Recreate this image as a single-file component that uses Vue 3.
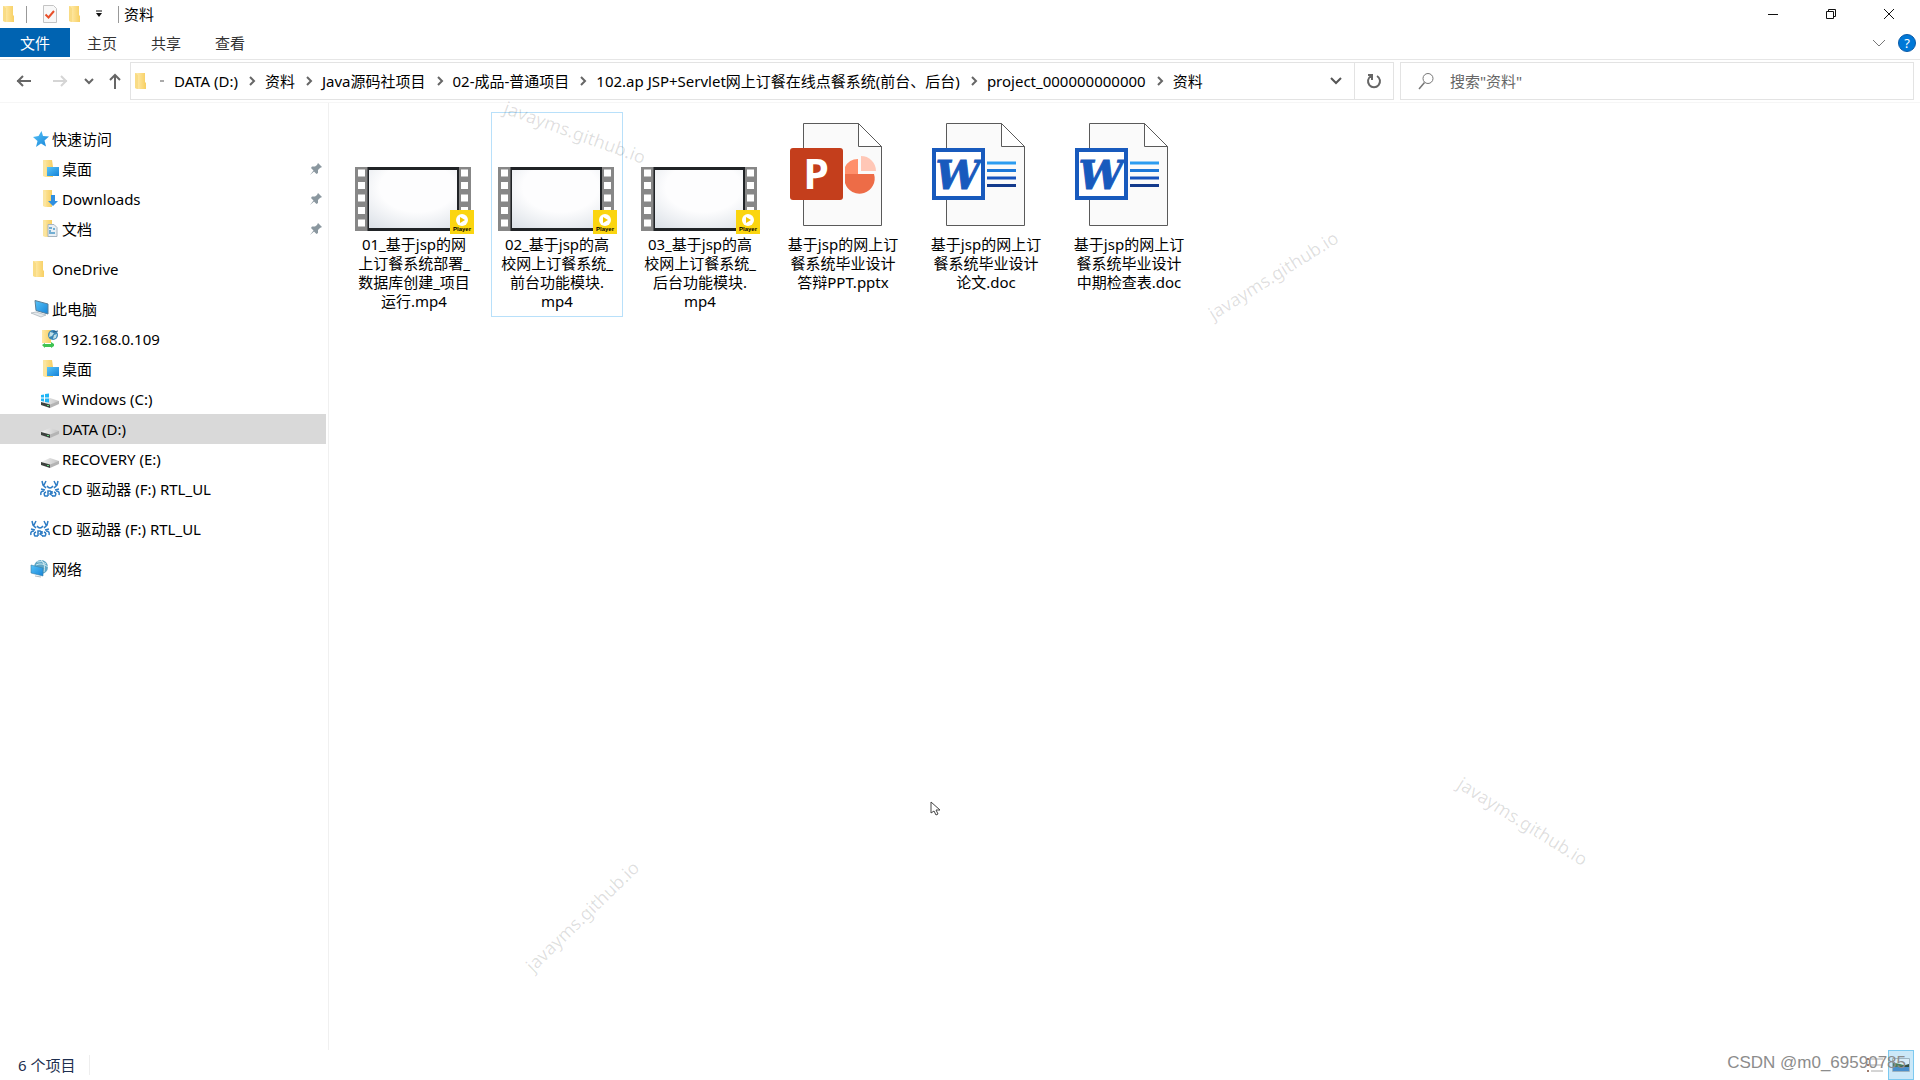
<script setup>
    import { ref } from 'vue'

    const search = ref('')
    const tabs = ['主页', '共享', '查看']

    const crumbs = [
        'DATA (D:)',
        '资料',
        'Java源码社项目',
        '02-成品-普通项目',
        '102.ap JSP+Servlet网上订餐在线点餐系统(前台、后台)',
        'project_000000000000',
        '资料'
    ]

    const groups = [
        [
            { name: '快速访问', icon: 'star' },
            { name: '桌面', icon: 'desktop', sub: true, pin: true },
            { name: 'Downloads', icon: 'download', sub: true, pin: true },
            { name: '文档', icon: 'docs', sub: true, pin: true }
        ],
        [{ name: 'OneDrive', icon: 'folder' }],
        [
            { name: '此电脑', icon: 'pc' },
            { name: '192.168.0.109', icon: 'ftp', sub: true },
            { name: '桌面', icon: 'desktop', sub: true },
            { name: 'Windows (C:)', icon: 'windrive', sub: true },
            { name: 'DATA (D:)', icon: 'drive', sub: true, active: true },
            { name: 'RECOVERY (E:)', icon: 'drive', sub: true },
            { name: 'CD 驱动器 (F:) RTL_UL', icon: 'cd', sub: true }
        ],
        [{ name: 'CD 驱动器 (F:) RTL_UL', icon: 'cd' }],
        [{ name: '网络', icon: 'network' }]
    ]

    const files = [
        { type: 'video', lines: ['01_基于jsp的网', '上订餐系统部署_', '数据库创建_项目', '运行.mp4'] },
        { type: 'video', lines: ['02_基于jsp的高', '校网上订餐系统_', '前台功能模块.', 'mp4'], focus: true },
        { type: 'video', lines: ['03_基于jsp的高', '校网上订餐系统_', '后台功能模块.', 'mp4'] },
        { type: 'ppt', lines: ['基于jsp的网上订', '餐系统毕业设计', '答辩PPT.pptx'] },
        { type: 'doc', lines: ['基于jsp的网上订', '餐系统毕业设计', '论文.doc'] },
        { type: 'doc', lines: ['基于jsp的网上订', '餐系统毕业设计', '中期检查表.doc'] }
    ]
</script>

<template>
    <div class="explorer">
        <!-- shared shapes -->
        <svg class="defs" aria-hidden="true">
            <defs>
                <linearGradient id="gold" x1="0" x2="1">
                    <stop offset="0" stop-color="#ffe9a6" />
                    <stop offset="1" stop-color="#f7cf62" />
                </linearGradient>
                <linearGradient id="sky" x1="0" x2="1" y2="1">
                    <stop offset="0" stop-color="#58c4f8" />
                    <stop offset="1" stop-color="#1583d8" />
                </linearGradient>
                <linearGradient id="metal" x1="0" x2="1">
                    <stop offset="0" stop-color="#f4f4f4" />
                    <stop offset="1" stop-color="#c4c4c4" />
                </linearGradient>
                <radialGradient id="screen" cx="0.55" cy="0.3" r="0.85">
                    <stop offset="0.5" stop-color="#fdfdfe" />
                    <stop offset="1" stop-color="#dde2e8" />
                </radialGradient>
                <symbol id="folder" viewBox="0 0 20 20">
                    <path d="M3 2h4v15l-2 1-2-1z" fill="#fbe5a0" />
                    <path d="M5 2h8v9l1 1v6H5z" fill="url(#gold)" />
                    <path d="M3 2l3 2v14l-3-1z" fill="#f9dc85" />
                </symbol>
                <symbol id="star" viewBox="0 0 20 20">
                    <path d="M11.500 2l1.500 5 6 .5-4.500 4 1.500 6-5-3-5 3.500 1.500-6L3 8l5.500-1z" fill="url(#sky)" />
                </symbol>
                <symbol id="desktop" viewBox="0 0 20 20">
                    <path d="M3 1h9l1 7v10H7l-4-1z" fill="url(#gold)" />
                    <path d="M3 1l3 2v15l-3-1z" fill="#fbe5a0" />
                    <path d="M7 8h12v9H7z" fill="url(#sky)" />
                </symbol>
                <symbol id="download" viewBox="0 0 20 20">
                    <path d="M3 1h9v17H7l-4-1z" fill="url(#gold)" />
                    <path d="M3 1l3 2v15l-3-1z" fill="#fbe5a0" />
                    <path d="M11 6h4v6h3l-5 5-5-5h3z" fill="#2f8fe0" />
                </symbol>
                <symbol id="docs" viewBox="0 0 20 20">
                    <path d="M3 1h9v17H7l-4-1z" fill="url(#gold)" />
                    <path d="M3 1l3 2v15l-3-1z" fill="#fbe5a0" />
                    <path d="M8 5.500h6l3 3v9H8z" fill="#e9eff4" stroke="#a6b4bf" />
                    <path d="M9 9h3M9 12h2M13 10h2M9 14h6" stroke="#4c9ac8" stroke-width="1.500" />
                </symbol>
                <symbol id="pc" viewBox="0 0 20 20">
                    <path d="M5 1.500l13 3.500v10L6 11.500z" fill="url(#sky)" stroke="#5b7f98" />
                    <path d="M1 14l5-1 10 3-5 2z" fill="#e3e8eb" stroke="#9aa5ac" stroke-width=".6" />
                </symbol>
                <symbol id="ftp" viewBox="0 0 20 20">
                    <path d="M2 1h9v13H2z" fill="url(#gold)" />
                    <circle cx="13" cy="6" r="5" fill="#3b87b6" />
                    <path d="M10 3l4 1-2 3-3 1zM14 6l3-1-1 4-3 1z" fill="#bfe0e8" />
                    <path d="M13 3l5-1" stroke="#285d86" />
                    <path d="M2 16l3-2v1h6v-2l3 2v2l-3 2v-1H5v1z" fill="#3fc353" />
                </symbol>
                <symbol id="drive" viewBox="0 0 20 20">
                    <path d="M1 13l9-4 9 3v1l-9 3z" fill="url(#metal)" />
                    <path d="M1 13l9 2.500V19l-9-3z" fill="#3c413e" />
                    <path d="M10 15.500l9-3.500V15l-9 4z" fill="#b4b4b4" />
                    <path d="M7 16.500h2" stroke="#5fd67b" />
                </symbol>
                <symbol id="windrive" viewBox="0 0 20 20">
                    <use href="#drive" width="20" height="20" />
                    <path d="M1 6l3-.5v3H1zM5 5l4-.5v4H5zM1 9.500h3v3L1 12zM5 9.500h4v4L5 13z" fill="#20b5f5" />
                </symbol>
                <symbol id="cd" viewBox="0 0 20 20">
                    <g fill="none" stroke="#2d7cc4" stroke-width="1.500">
                        <path d="M2 2l1 4 3 3M6 2L4 6M18 2l-1 4-3 3M14 2l2 4" />
                        <path d="M7 7q3 4 6 0M1 10l4 1M19 10l-4 1" />
                        <path d="M4 12q-4 0-3 4M6 13q-3 1-1 4h3M16 12q4 0 3 4M14 13q3 1 1 4h-3" />
                        <path d="M8 17v-5h2q2 1 0 3l3 2M12 12v3" />
                    </g>
                </symbol>
                <symbol id="network" viewBox="0 0 20 20">
                    <circle cx="11" cy="8" r="7" fill="#5fa6c5" />
                    <path d="M7 3q5-2 9 2M6 6q6-3 12 2M11 1q5 4 3 12" fill="none" stroke="#c7e5ed" />
                    <path d="M1 6l12 3v8L1 14z" fill="url(#sky)" stroke="#397fa8" stroke-width=".6" />
                    <path d="M5 17l6 1" stroke="#b6bec2" />
                </symbol>
                <symbol id="page" viewBox="0 0 130 122">
                    <path d="M25.500 10.500h55l23 23v79h-78z" fill="#fafafa" stroke="#5a5a5a" />
                    <path d="M80.500 10.500v23h23z" fill="#fff" stroke="#5a5a5a" />
                </symbol>
            </defs>
        </svg>

        <header class="titlebar">
            <svg class="ico"><use href="#folder" /></svg>
            <i class="bar"></i>
            <button class="quick" aria-label="属性">
                <svg width="16" height="18" viewBox="0 0 16 18">
                    <path d="M1.500.5h10l3 3v14h-13z" fill="#f8f8f8" stroke="#c4c4c4" />
                    <path d="M3.500 9.500l3 3L12 6" fill="none" stroke="#e8502a" stroke-width="2" />
                </svg>
            </button>
            <button class="quick" aria-label="新建文件夹"><svg class="ico"><use href="#folder" /></svg></button>
            <button class="more" aria-label="自定义快速访问工具栏">
                <svg width="8" height="8" viewBox="0 0 8 8"><path d="M1 1h6" stroke="#111" /><path d="M1 3h6L4 7z" fill="#111" /></svg>
            </button>
            <i class="bar"></i>
            <h1>资料</h1>
            <div class="window-buttons">
                <button aria-label="最小化"><svg viewBox="0 0 12 12"><path d="M1 6.500h10" /></svg></button>
                <button aria-label="还原"><svg viewBox="0 0 12 12"><path d="M1.500 3.500h7v7h-7zM3.500 3.500v-2h7v7h-2" /></svg></button>
                <button aria-label="关闭"><svg viewBox="0 0 12 12"><path d="M1 1l10 10M11 1L1 11" /></svg></button>
            </div>
        </header>

        <nav class="ribbon">
            <button class="file-tab">文件</button>
            <button v-for="t in tabs" :key="t" class="tab">{{ t }}</button>
            <div class="ribbon-end">
                <button aria-label="展开功能区"><svg width="14" height="10" viewBox="0 0 14 10"><path d="M1 2l6 6 6-6" fill="none" stroke="#777" /></svg></button>
                <button class="help" aria-label="帮助">?</button>
            </div>
        </nav>

        <div class="navbar">
            <div class="arrows">
                <button aria-label="后退"><svg viewBox="0 0 16 16"><path d="M1 8h14M7 3L2 8l5 5" /></svg></button>
                <button class="off" aria-label="前进" disabled><svg viewBox="0 0 16 16"><path d="M1 8h14M9 3l5 5-5 5" /></svg></button>
                <button class="small" aria-label="最近浏览的位置"><svg viewBox="0 0 16 16"><path d="M4 6l4 4 4-4" /></svg></button>
                <button class="up" aria-label="上移"><svg viewBox="0 0 16 16"><path d="M8 16V2M3 7l5-5 5 5" /></svg></button>
            </div>
            <div class="address">
                <svg class="ico"><use href="#folder" /></svg>
                <span class="root"></span>
                <template v-for="(c, i) in crumbs" :key="i">
                    <svg v-if="i" class="sep" viewBox="0 0 27 12"><path d="M12 2l4 4-4 4" /></svg>
                    <a href="#">{{ c }}</a>
                </template>
                <button class="drop" aria-label="以前的位置"><svg width="12" height="10" viewBox="0 0 12 10"><path d="M1 2l5 5 5-5" fill="none" stroke="#555" stroke-width="2" /></svg></button>
                <button class="refresh" aria-label="刷新">
                    <svg width="16" height="16" viewBox="0 0 16 16"><path d="M11 3a6 6 0 1 1-6 0M2 2h4v5" fill="none" stroke="#666" stroke-width="2" /></svg>
                </button>
            </div>
            <label class="search">
                <svg width="18" height="18" viewBox="0 0 18 18"><circle cx="10" cy="6.500" r="5" fill="none" stroke="#777" /><path d="M6.500 10.500L1 17" stroke="#777" stroke-width="1.500" /></svg>
                <input v-model="search" type="text" placeholder='搜索"资料"' aria-label="搜索">
            </label>
        </div>

        <main class="body">
            <aside class="tree">
                <ul v-for="(g, i) in groups" :key="i">
                    <li v-for="item in g" :key="item.name" :class="{ sub: item.sub, active: item.active }">
                        <a href="#">
                            <svg class="ico"><use :href="'#' + item.icon" /></svg>
                            <span>{{ item.name }}</span>
                            <svg v-if="item.pin" class="pin" viewBox="0 0 14 14">
                                <path d="M9 1l4 4-2 1-2 2v3l-1.500 1L5 9.500 1 13l3.500-4.500L2 6l1-1.500h3L8 3z" fill="#8a979f" />
                            </svg>
                        </a>
                    </li>
                </ul>
            </aside>

            <section class="files">
                <a v-for="f in files" :key="f.lines.join('')" href="#" class="file" :class="{ focus: f.focus }">
                    <svg class="thumb" viewBox="0 0 130 122">
                        <template v-if="f.type === 'video'">
                            <path d="M6 54h13v64H6zM109 54h13v64h-13z" fill="#878787" />
                            <g v-for="n in 5" :key="n" fill="#fff">
                                <rect x="9" :y="44 + n * 12.5" width="7" height="7" />
                                <rect x="112" :y="44 + n * 12.5" width="7" height="7" />
                            </g>
                            <rect x="18.500" y="54" width="91.500" height="64" fill="#202326" />
                            <rect x="20" y="57" width="88" height="58" fill="url(#screen)" />
                            <rect x="101" y="97" width="24" height="24" fill="#fbd510" />
                            <circle cx="113" cy="107" r="6" fill="#fff" />
                            <path d="M111 104l5 3-5 3z" fill="#f2c500" />
                            <text x="113" y="118" class="player">Player</text>
                        </template>
                        <template v-else-if="f.type === 'ppt'">
                            <use href="#page" />
                            <rect x="12" y="35" width="53" height="52" rx="3" fill="#c43e1c" />
                            <text x="38" y="76" class="letter-p">P</text>
                            <path d="M80 46v16H67V54q4-8 13-8z" fill="#ff8f6b" />
                            <path d="M67 61h29a15 15 0 0 1-29 9z" fill="#ed6c47" />
                            <path d="M83 43a15 15 0 0 1 15 15H83z" fill="#ffc7b6" />
                        </template>
                        <template v-else>
                            <use href="#page" />
                            <rect x="13" y="37" width="49" height="48" fill="#fff" stroke="#185abd" stroke-width="4" />
                            <text x="37" y="76" class="letter-w">W</text>
                            <path d="M66 50h29" stroke="#2b9cf0" stroke-width="3" />
                            <path d="M66 57.500h29" stroke="#1d78d8" stroke-width="3" />
                            <path d="M66 65h29" stroke="#1552bd" stroke-width="3" />
                            <path d="M66 72.500h29" stroke="#133a8c" stroke-width="3" />
                        </template>
                    </svg>
                    <span v-for="l in f.lines" :key="l" class="line">{{ l }}</span>
                </a>
            </section>
        </main>

        <footer class="status">
            <span class="count">6 个项目</span>
            <div class="views">
                <button aria-label="详细信息">
                    <svg width="18" height="16" viewBox="0 0 18 16"><path d="M1 2h2M1 8h2M1 14h2" stroke="#a07c6c" stroke-width="2" /><path d="M5 2h12M5 8h12M5 14h12" stroke="#aaa" /></svg>
                </button>
                <button class="on" aria-label="大图标">
                    <svg width="18" height="14" viewBox="0 0 18 14"><path d="M.5.5h17v13H.5z" fill="#d8ecf8" stroke="#9db4c2" /><path d="M1 5q6 0 16 4v1H1z" fill="#4b7f5c" /><path d="M1 9h16v4H1z" fill="#4a8fcb" /><path d="M6 9l11-3v3z" fill="#2f4f45" /></svg>
                </button>
            </div>
        </footer>

        <span class="mark m1">javayms.github.io</span>
        <span class="mark m2">javayms.github.io</span>
        <span class="mark m3">javayms.github.io</span>
        <span class="mark m4">javayms.github.io</span>
        <span class="csdn">CSDN @m0_69590785</span>
        <svg class="cursor" width="12" height="16" viewBox="0 0 12 16"><path d="M1 1v11l3-2 2 4 2-1-2-4h4z" fill="#fff" stroke="#444" /></svg>
    </div>
</template>

<style>
    body {
        margin: 0;
        background: #fff;
    }
</style>

<style scoped>
    .explorer {
        position: relative;
        display: flex;
        flex-direction: column;
        min-height: 100vh;
        overflow: hidden;
        background: #fff;
        color: #000;
        font: 15px/20px "Noto Sans", "Noto Sans CJK SC", sans-serif;
    }

    .explorer * {
        box-sizing: border-box;
    }

    .defs {
        position: absolute;
        width: 0;
        height: 0;
    }

    button {
        display: flex;
        align-items: center;
        justify-content: center;
        padding: 0;
        border: 0;
        background: none;
        color: inherit;
        font: inherit;
    }

    a {
        color: inherit;
        text-decoration: none;
    }

    .ico {
        flex: none;
        width: 20px;
        height: 20px;
    }

    .titlebar {
        display: flex;
        align-items: center;
        height: 28px;
    }

    .bar {
        width: 1px;
        height: 17px;
        margin: 0 5px 0 6px;
        background: #999;
    }

    .quick {
        width: 26px;
    }

    .bar + .quick {
        margin-left: 5px;
    }

    .more {
        width: 20px;
        margin-right: 3px;
    }

    h1 {
        margin: 0;
        font-size: 15px;
        font-weight: 400;
    }

    .window-buttons {
        display: flex;
        margin-left: auto;
        padding-right: 2px;
    }

    .window-buttons button {
        width: 58px;
        height: 28px;
    }

    .window-buttons svg {
        width: 12px;
        height: 12px;
        fill: none;
        stroke: #111;
    }

    .ribbon {
        display: flex;
        height: 32px;
        padding-bottom: 2px;
        border-bottom: 1px solid #e6e6e6;
    }

    .file-tab {
        width: 70px;
        background: #0063b1;
        color: #fff;
    }

    .tab {
        width: 64px;
        color: #333;
    }

    .ribbon-end {
        display: flex;
        align-items: center;
        gap: 12px;
        margin-left: auto;
        padding-right: 4px;
    }

    .help {
        width: 18px;
        height: 18px;
        border: 1px solid #0a5aa8;
        border-radius: 50%;
        background: #0078d7;
        color: #fff;
        font-size: 13px;
    }

    .navbar {
        display: flex;
        height: 43px;
        padding: 2px 6px 2px 0;
        border-bottom: 1px solid #f6f6f6;
    }

    .arrows {
        display: flex;
        align-items: center;
        width: 130px;
        padding-left: 16px;
    }

    .arrows button {
        width: 16px;
        margin-right: 20px;
    }

    .arrows .off {
        margin-right: 13px;
    }

    .arrows .small {
        margin-right: 10px;
    }

    .arrows .up {
        margin-right: 0;
    }

    .arrows svg {
        width: 16px;
        height: 16px;
        fill: none;
        stroke: #666;
        stroke-width: 2;
    }

    .arrows .off svg {
        stroke: #d5d5d5;
    }

    .address {
        display: flex;
        flex: 1 1 1264px;
        align-items: center;
        padding-left: 1px;
        border: 1px solid #e3e3e3;
        white-space: nowrap;
    }

    .root {
        width: 4px;
        height: 2px;
        margin: 0 10px 0 8px;
        background: #aaa;
    }

    .sep {
        width: 27px;
        height: 12px;
        fill: none;
        stroke: #666;
        stroke-width: 2;
    }

    .drop {
        width: 36px;
        height: 36px;
        margin-left: auto;
    }

    .refresh {
        width: 39px;
        height: 37px;
        border-left: 1px solid #e3e3e3;
    }

    .search {
        display: flex;
        flex: 0 1 514px;
        align-items: center;
        margin-left: 6px;
        padding-left: 17px;
        border: 1px solid #e3e3e3;
    }

    .search input {
        flex: 1;
        min-width: 0;
        margin-left: 14px;
        padding: 0;
        border: 0;
        outline: 0;
        background: none;
        font: inherit;
    }

    .search input::placeholder {
        color: #666;
        opacity: 1;
    }

    .body {
        display: flex;
        flex: 1;
    }

    .tree {
        flex: none;
        width: 329px;
        padding: 21px 2px 0 0;
        border-right: 1px solid #f0f0f0;
    }

    .tree ul {
        margin: 0 0 10px;
        padding: 0;
        list-style: none;
    }

    .tree a {
        display: flex;
        align-items: center;
        gap: 2px;
        height: 30px;
        padding: 0 3px 0 30px;
    }

    .tree .sub a {
        padding-left: 40px;
    }

    .tree .active {
        background: #d9d9d9;
    }

    .pin {
        width: 14px;
        height: 14px;
        margin-left: auto;
    }

    .files {
        display: flex;
        flex: 1;
        flex-wrap: wrap;
        align-content: flex-start;
        align-items: flex-start;
        gap: 11px;
        padding: 9px 0 0 19px;
    }

    .file {
        width: 132px;
        min-height: 205px;
        border: 1px solid transparent;
        text-align: center;
    }

    .file.focus {
        border-color: #b8e0fa;
    }

    .thumb {
        display: block;
        width: 130px;
        height: 122px;
    }

    .line {
        display: block;
        line-height: 19px;
        white-space: nowrap;
    }

    .player {
        font: bold 6px "Liberation Sans", sans-serif;
        text-anchor: middle;
    }

    .letter-p {
        fill: #fff;
        font: bold 41px "Open Sans", sans-serif;
        text-anchor: middle;
    }

    .letter-w {
        fill: #185abd;
        stroke: #185abd;
        font: italic bold 40px "DejaVu Serif", serif;
        text-anchor: middle;
    }

    .status {
        display: flex;
        align-items: center;
        height: 30px;
        padding: 0 6px 0 18px;
        color: #1e2f4f;
    }

    .count {
        padding-right: 14px;
        border-right: 1px solid #eee;
    }

    .views {
        display: flex;
        margin-left: auto;
    }

    .views button {
        width: 26px;
        height: 30px;
    }

    .views .on {
        border: 1px solid #7cc9f0;
        background: #cce8f8;
    }

    /* watermarks and pointer float over the window */
    .mark {
        position: absolute;
        width: 160px;
        color: rgba(0, 0, 0, 0.13);
        font-size: 18px;
        line-height: 24px;
        text-align: center;
        pointer-events: none;
    }

    .m1 {
        top: 120px;
        left: 495px;
        transform: rotate(20deg);
    }

    .m2 {
        top: 263px;
        left: 1193px;
        transform: rotate(-32deg);
    }

    .m3 {
        top: 904px;
        left: 502px;
        transform: rotate(-44deg);
    }

    .m4 {
        top: 809px;
        left: 1443px;
        transform: rotate(32deg);
    }

    .csdn {
        position: absolute;
        right: 14px;
        bottom: 7px;
        color: #8c8c8c;
        font: 17px/20px "Liberation Sans", sans-serif;
    }

    .cursor {
        position: absolute;
        top: 801px;
        left: 930px;
    }
</style>
